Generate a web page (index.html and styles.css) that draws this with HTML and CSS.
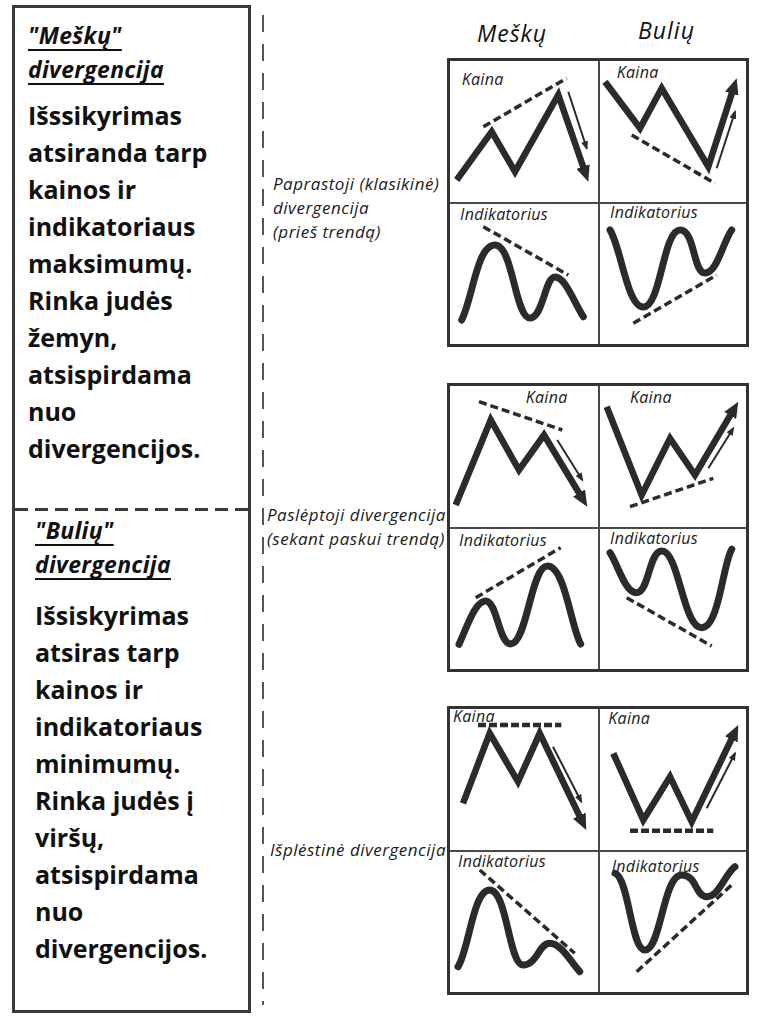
FILE: index.html
```html
<!DOCTYPE html>
<html lang="lt">
<head>
<meta charset="utf-8">
<title>Divergencijos</title>
<link rel="stylesheet" href="styles.css">
</head>
<body>
<svg class="svg-defs" width="0" height="0" aria-hidden="true">
  <defs>
    <marker id="ah" markerUnits="userSpaceOnUse" markerWidth="16" markerHeight="14" refX="5" refY="7" orient="auto">
      <path d="M0,0 L16,7 L0,14 z" fill="#2b2b2b"/>
    </marker>
    <marker id="ahs" markerUnits="userSpaceOnUse" markerWidth="9" markerHeight="7" refX="7" refY="3.5" orient="auto">
      <path d="M0,0 L9,3.5 L0,7 z" fill="#2b2b2b"/>
    </marker>
  </defs>
</svg>
<div class="page">
  <div class="defs">
    <section class="def def-bear">
      <h2 class="def-title">"Meškų"<br>divergencija</h2>
      <p class="def-text">Išssikyrimas<br>atsiranda tarp<br>kainos ir<br>indikatoriaus<br>maksimumų.<br>Rinka judės<br>žemyn,<br>atsispirdama<br>nuo<br>divergencijos.</p>
    </section>
    <div class="sep"></div>
    <section class="def def-bull">
      <h2 class="def-title">"Bulių"<br>divergencija</h2>
      <p class="def-text">Išsiskyrimas<br>atsiras tarp<br>kainos ir<br>indikatoriaus<br>minimumų.<br>Rinka judės į<br>viršų,<br>atsispirdama<br>nuo<br>divergencijos.</p>
    </section>
  </div>
  <div class="vline"></div>
  <div class="diagram">
    <div class="head">
      <span class="head-bear">Meškų</span>
      <span class="head-bull">Bulių</span>
    </div>

    <div class="row">
      <div class="row-label label-1">Paprastoji (klasikinė)<br>divergencija<br>(prieš trendą)</div>
      <div class="panel">
        <div class="cell">
          <svg viewBox="3 3 148 141" class="chart">
            <text x="14.7" y="27" class="lbl">Kaina</text>
            <path class="dash" d="M36.3,68.7 L119.7,20.3"/>
            <path class="zig" d="M9.7,122 L44.7,73.7 L68,113.7 L111.3,37 L137.7,113.3" marker-end="url(#ah)"/>
            <path class="thin" d="M121.3,33.7 L139.7,90.3" marker-end="url(#ahs)"/>
          </svg>
        </div>
        <div class="cell r">
          <svg viewBox="1 3 146 141" class="chart">
            <text x="17.7" y="20" class="lbl">Kaina</text>
            <path class="dash" d="M32.7,77 L116,125.3"/>
            <path class="zig" d="M6,23.7 L41,70.3 L62.7,30.3 L109.3,108.7 L134.3,30.8" marker-end="url(#ah)"/>
            <path class="thin" d="M117.7,110.3 L136,53.7" marker-end="url(#ahs)"/>
          </svg>
        </div>
        <div class="cell b">
          <svg viewBox="3 2 148 140" class="chart">
            <text x="13" y="18" class="lbl">Indikatorius</text>
            <path class="dash" d="M36.3,24.7 L121.3,73"/>
            <path class="wave" d="M14.7,118 C26,95 30,43 48,43 C66,43 68,116 83,116 C96,116 98,75 108,75 C118,75 126,98 136.3,114.7"/>
          </svg>
        </div>
        <div class="cell r b">
          <svg viewBox="1 2 146 140" class="chart">
            <text x="11" y="16.3" class="lbl">Indikatorius</text>
            <path class="dash" d="M34.3,121.3 L117.7,73"/>
            <path class="wave" d="M11,28 C22,45 28,105 44.3,105 C62,105 64,28 81,28 C96,28 94,71 106,71 C118,71 124,40 132.7,28"/>
          </svg>
        </div>
      </div>
    </div>

    <div class="row row-2">
      <div class="row-label label-2">Paslėptoji divergencija<br>(sekant paskui trendą)</div>
      <div class="panel">
        <div class="cell">
          <svg viewBox="3 3 148 141" class="chart">
            <text x="78.7" y="20.3" class="lbl">Kaina</text>
            <path class="dash" d="M32,18.7 L115.3,47"/>
            <path class="zig" d="M8.7,122 L43.7,37 L72,87 L97,52 L134.6,114.3" marker-end="url(#ah)"/>
            <path class="thin" d="M110.3,57 L135.3,97" marker-end="url(#ahs)"/>
          </svg>
        </div>
        <div class="cell r">
          <svg viewBox="1 3 146 141" class="chart">
            <text x="31" y="20.3" class="lbl">Kaina</text>
            <path class="dash" d="M31,123.7 L114.3,95.3"/>
            <path class="zig" d="M7.7,23.7 L42.7,112 L71,55.3 L96,92 L133.7,28.2" marker-end="url(#ah)"/>
            <path class="thin" d="M109.3,85.3 L134.3,45.3" marker-end="url(#ahs)"/>
          </svg>
        </div>
        <div class="cell b">
          <svg viewBox="3 2 148 140" class="chart">
            <text x="12" y="19" class="lbl">Indikatorius</text>
            <path class="dash" d="M28.7,70.7 L113.7,20.7"/>
            <path class="wave" d="M12,117.3 C20,100 28,74 38.7,74 C50,74 52,117 63.7,117 C80,117 84,39 100.3,39 C118,39 124,100 133.7,117"/>
          </svg>
        </div>
        <div class="cell r b">
          <svg viewBox="1 2 146 140" class="chart">
            <text x="11" y="17.3" class="lbl">Indikatorius</text>
            <path class="dash" d="M27.7,70.7 L112.7,119"/>
            <path class="wave" d="M11,25.7 C20,40 26,65.7 37.7,65.7 C50,65.7 50,24 62.7,24 C80,24 84,100.7 102.7,100.7 C120,100.7 124,36 132.7,22.3"/>
          </svg>
        </div>
      </div>
    </div>

    <div class="row row-3">
      <div class="row-label label-3">Išplėstinė divergencija</div>
      <div class="panel">
        <div class="cell">
          <svg viewBox="3 3 148 141" class="chart">
            <path class="dash dash-h" d="M31,19 L114.3,19"/>
            <text x="6" y="15.7" class="lbl">Kaina</text>
            <path class="zig" d="M16,97.3 L42.7,27.3 L71,75.7 L92.7,27.3 L134.5,114.1" marker-end="url(#ah)"/>
            <path class="thin" d="M106,40.7 L134.3,95.7" marker-end="url(#ahs)"/>
          </svg>
        </div>
        <div class="cell r">
          <svg viewBox="1 3 146 141" class="chart">
            <text x="9.3" y="18.3" class="lbl">Kaina</text>
            <path class="dash dash-h" d="M31,124.7 L114.3,124.7"/>
            <path class="zig" d="M14.3,47.3 L44.3,114 L71,70.7 L92.7,115.7 L134.5,28.9" marker-end="url(#ah)"/>
            <path class="thin" d="M107.7,102.3 L136,47.3" marker-end="url(#ahs)"/>
          </svg>
        </div>
        <div class="cell b">
          <svg viewBox="3 2 148 140" class="chart">
            <text x="11" y="16.7" class="lbl">Indikatorius</text>
            <path class="dash" d="M32.7,20 L127.7,103.3"/>
            <path class="wave" d="M11,116.7 C22,100 26,40 42.7,40 C60,40 62,115 76,115 C90,115 92,93.3 102.7,93.3 C114,93.3 124,112 132.7,121.7"/>
          </svg>
        </div>
        <div class="cell r b">
          <svg viewBox="1 2 146 140" class="chart">
            <text x="12.7" y="21.7" class="lbl">Indikatorius</text>
            <path class="dash" d="M37.7,121.7 L132.7,35"/>
            <path class="wave" d="M16,23.3 C30,28 32,100 46,100 C62,100 64,25 82.7,25 C98,25 96,46.7 107.7,46.7 C120,46.7 126,24 136,16.7"/>
          </svg>
        </div>
      </div>
    </div>
  </div>
</div>
</body>
</html>
```

FILE: styles.css
```css
html, body {
  margin: 0;
  padding: 0;
  background: #ffffff;
}

body {
  font-family: "Open Sans", "Liberation Sans", sans-serif;
  color: #111111;
}

.svg-defs {
  display: block;
  width: 0;
  height: 0;
  overflow: hidden;
}

.page {
  display: flex;
  align-items: flex-start;
  width: 760px;
  height: 1024px;
  overflow: hidden;
}

/* Left definitions box */
.defs {
  margin: 5px 0 0 12px;
  width: 239px;
  height: 1008px;
  box-sizing: border-box;
  border: 3px solid #3a3a3a;
  display: flex;
  flex-direction: column;
}

.def {
  box-sizing: border-box;
}

.def-bear {
  height: 500px;
  padding: 10px 0 0 13px;
}

.def-bull {
  flex: 1;
  padding: 2px 0 0 20px;
}

.sep {
  height: 3px;
  background: repeating-linear-gradient(to right, #3a3a3a 0 13px, transparent 13px 20px);
}

.def-title {
  margin: 0;
  font-size: 23px;
  line-height: 34px;
  letter-spacing: 0.3px;
  font-style: italic;
  font-weight: 700;
  text-decoration: underline;
  text-decoration-thickness: 2px;
  text-underline-offset: 5px;
  text-decoration-skip-ink: none;
}

.def-text {
  margin: 11px 0 0;
  font-size: 25px;
  line-height: 37px;
  font-weight: 700;
}

.def-bull .def-text {
  margin-top: 16px;
}

/* Vertical dashed divider */
.vline {
  margin: 15px 0 0 11px;
  width: 2px;
  height: 990px;
  background: repeating-linear-gradient(to bottom, #555555 0 17px, transparent 17px 29px);
}

/* Diagram area */
.diagram {
  display: flex;
  flex-direction: column;
}

.head {
  display: flex;
  height: 58px;
  margin-left: 183px;
  font-size: 23px;
  font-style: italic;
  line-height: 30px;
  letter-spacing: 1px;
}

.head-bear {
  width: 151px;
  box-sizing: border-box;
  padding: 18px 0 0 30px;
}

.head-bull {
  width: 151px;
  box-sizing: border-box;
  padding: 15px 0 0 40px;
}

.row {
  display: flex;
  align-items: flex-start;
}

.row-2 {
  margin-top: 36px;
}

.row-3 {
  margin-top: 34px;
}

.row-label {
  width: 183px;
  box-sizing: border-box;
  font-size: 17px;
  line-height: 24px;
  letter-spacing: 0.5px;
  font-style: italic;
  white-space: nowrap;
  color: #1a1a1a;
}

.label-1 {
  padding: 114px 0 0 9px;
}

.label-2 {
  padding: 120px 0 0 3px;
}

.label-3 {
  padding: 132px 0 0 6px;
}

.panel {
  width: 302px;
  height: 289px;
  box-sizing: border-box;
  border: 3px solid #333333;
  display: grid;
  grid-template-columns: 148px 148px;
  grid-template-rows: 141px 142px;
  background: #ffffff;
}

.cell {
  min-width: 0;
}

.cell.r {
  border-left: 2px solid #4a4a4a;
}

.cell.b {
  border-top: 2px solid #4a4a4a;
}

.chart {
  display: block;
  width: 100%;
  height: 100%;
  overflow: visible;
}

.lbl {
  font-family: "Open Sans", "Liberation Sans", sans-serif;
  font-style: italic;
  font-size: 16px;
  letter-spacing: 0.3px;
  fill: #1a1a1a;
}

.zig {
  fill: none;
  stroke: #2b2b2b;
  stroke-width: 6.5;
  stroke-linejoin: miter;
  stroke-linecap: butt;
}

.thin {
  fill: none;
  stroke: #2b2b2b;
  stroke-width: 2;
}

.wave {
  fill: none;
  stroke: #2b2b2b;
  stroke-width: 7;
  stroke-linecap: round;
  stroke-linejoin: round;
}

.dash {
  fill: none;
  stroke: #2b2b2b;
  stroke-width: 3.5;
  stroke-dasharray: 8 4;
}

.dash-h {
  stroke-width: 4.5;
  stroke-dasharray: 8 3;
}
```
